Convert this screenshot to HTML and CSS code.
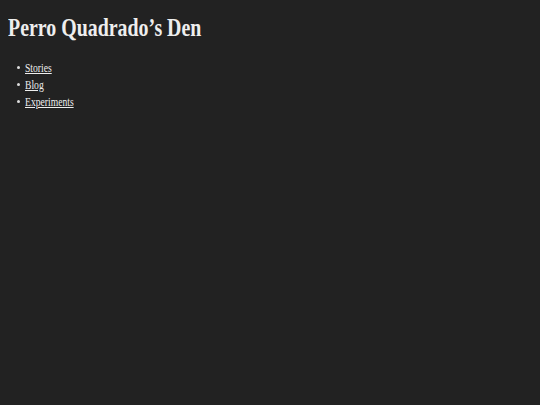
FILE: index.html
```html
<!DOCTYPE html>
<html>
<head>
<meta charset="utf-8">
<link rel="stylesheet" href="styles.css">
</head>
<body>
<h1 class="title"><span class="narrow">Perro Quadrado’s Den</span></h1>
<ul class="nav">
<li><a href="#">Stories</a></li>
<li><a href="#">Blog</a></li>
<li><a href="#">Experiments</a></li>
</ul>
</body>
</html>
```
FILE: styles.css
```css
html, body { background: #222222; }
body {
  margin: 8px;
  color: #eeeeee;
  font-family: "Liberation Serif", serif;
}
.title {
  font-size: 26px;
  font-weight: bold;
  margin: 5px 0 16px 0;
  line-height: 30px;
  color: #eeeeee;
  white-space: nowrap;
}
.narrow {
  display: inline-block;
  transform: scaleX(0.765);
  transform-origin: left center;
}
.nav {
  margin: 0;
  padding-left: 9px;
  list-style: none;
  font-size: 13px;
  line-height: 17px;
}
.nav li::before {
  content: "";
  display: inline-block;
  width: 3px;
  height: 3px;
  border-radius: 50%;
  background: #dddddd;
  margin-right: 5px;
  vertical-align: 3px;
}
.nav a {
  color: #eeeeee;
  display: inline-block;
  transform: scaleX(0.74);
  transform-origin: left center;
}
```
